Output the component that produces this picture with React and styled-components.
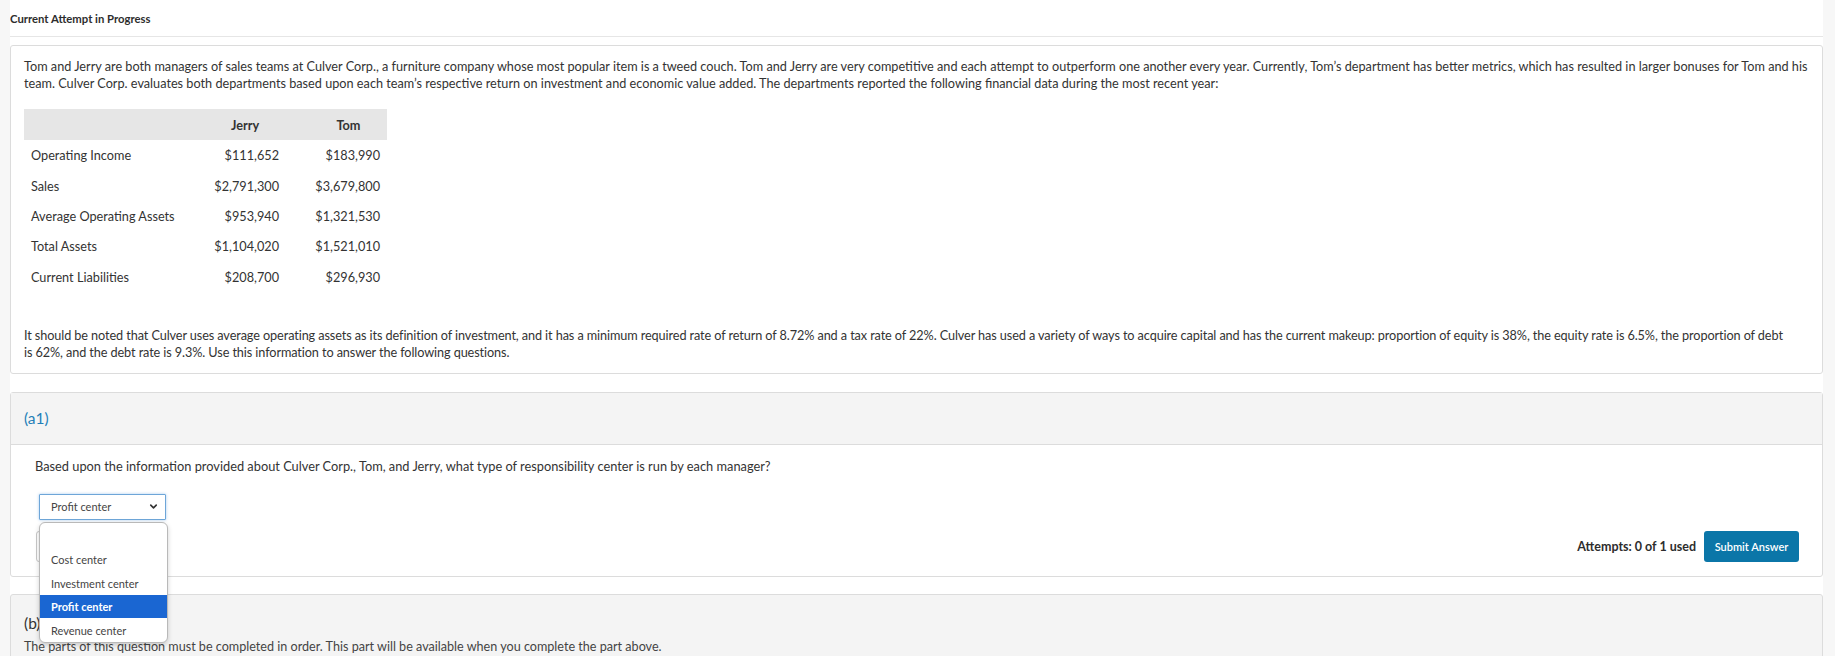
import React from 'react';
import styled, { createGlobalStyle } from 'styled-components';
import { ChevronDown } from 'lucide-react';

const GlobalStyle = createGlobalStyle`
  html, body {
    margin: 0;
    padding: 0;
    background: #f7f7f7;
  }
  body {
    font-family: Lato, "Open Sans", Arial, sans-serif;
    color: #333;
  }
`;

const Page = styled.main`
  margin: 0 12px 0 10px;
  background: #fff;
  height: 656px;
  overflow: hidden;
`;

const TopBar = styled.div`
  height: 35px;
  display: flex;
  align-items: center;
  border-bottom: 1px solid #e6e6e6;
  font-size: 11.3px;
  font-weight: 700;
  color: #2d2d2d;
  padding-top: 1px;
`;

const Card = styled.section`
  border: 1px solid #dcdcdc;
  border-radius: 3px;
  background: ${p => (p.$muted ? '#f4f4f4' : '#fff')};
  margin-top: ${p => p.$gap || 0}px;
`;

const CardBody = styled.div`
  padding: ${p => p.$pad || '12px 13px'};
`;

const Para = styled.p`
  margin: 0;
  font-size: 12.7px;
  letter-spacing: ${p => p.$track || 0}px;
  max-width: ${p => p.$max || 'none'};
  line-height: 17px;
  color: #333;
`;

const DataTable = styled.table`
  border-collapse: collapse;
  margin: 17px 0 35px;
  font-size: 12.7px;
  color: #333;

  th {
    background: #e6e6e6;
    height: 31px;
    font-weight: 700;
    text-align: center;
    padding: 0;
  }
  td {
    height: 30.4px;
    padding: 0 7px;
    text-align: right;
  }
  td:first-child {
    text-align: left;
    padding-left: 7px;
  }
`;

const PartHeader = styled.div`
  height: 51px;
  display: flex;
  align-items: center;
  padding: 0 13px;
  background: #f4f4f4;
  border-bottom: 1px solid #dcdcdc;
  font-size: 15.5px;
  color: #1f7fb8;
`;

const Question = styled.div`
  font-size: 12.8px;
  line-height: 17px;
  margin-top: 13px;
`;

const SelectWrap = styled.div`
  position: relative;
  margin: 19px 0 0 4px;
  width: 127px;
`;

const SelectBox = styled.div`
  box-sizing: border-box;
  height: 26px;
  border: 1px solid #6ea6d8;
  box-shadow: 0 0 3px rgba(60, 140, 220, 0.45);
  border-radius: 1px;
  display: flex;
  align-items: center;
  justify-content: space-between;
  padding: 0 6px 0 11px;
  font-size: 11px;
  color: #444;
  background: #fff;
`;

const Listbox = styled.ul`
  position: absolute;
  top: 28px;
  left: 0;
  width: 127px;
  margin: 0;
  padding: 0;
  list-style: none;
  background: #fff;
  border: 1px solid #b9b9b9;
  border-radius: 6px;
  box-shadow: 0 2px 5px rgba(0, 0, 0, 0.18);
  overflow: hidden;
  z-index: 5;
`;

const Option = styled.li`
  height: ${p => (p.$blank ? 25 : 23.5)}px;
  display: flex;
  align-items: center;
  padding-left: 11px;
  font-size: 11px;
  color: ${p => (p.$active ? '#fff' : '#444')};
  background: ${p => (p.$active ? '#1a66d2' : 'transparent')};
  font-weight: ${p => (p.$active ? 700 : 400)};
`;

const ActionRow = styled.div`
  display: flex;
  align-items: center;
  justify-content: space-between;
  margin-top: 11px;
  margin-left: 1px;
`;

const GhostButton = styled.button`
  height: 31px;
  padding: 0 16px;
  border: 1px solid #c8c8c8;
  border-radius: 3px;
  background: #fff;
  font-family: inherit;
  font-size: 11px;
  color: #555;
`;

const Right = styled.div`
  display: flex;
  align-items: center;
  gap: 8px;
`;

const Attempts = styled.span`
  font-size: 12.5px;
  font-weight: 700;
  color: #2d2d2d;
`;

const SubmitButton = styled.button`
  height: 31px;
  width: 95px;
  border: none;
  border-radius: 3px;
  background: #0b76a8;
  color: #fff;
  font-family: inherit;
  font-size: 11px;
  font-weight: 600;
`;

const PartTitle = styled.div`
  font-size: 15.5px;
  color: #333;
  line-height: 20px;
`;

const Note = styled.div`
  font-size: 12.6px;
  color: #444;
  line-height: 17px;
  margin-top: 5px;
`;

const rows = [
  ['Operating Income', '$111,652', '$183,990'],
  ['Sales', '$2,791,300', '$3,679,800'],
  ['Average Operating Assets', '$953,940', '$1,321,530'],
  ['Total Assets', '$1,104,020', '$1,521,010'],
  ['Current Liabilities', '$208,700', '$296,930'],
];

const options = ['Cost center', 'Investment center', 'Profit center', 'Revenue center'];

export default function App() {
  return (
    <>
      <GlobalStyle />
      <Page>
        <TopBar>Current Attempt in Progress</TopBar>

        <Card $gap={8}>
          <CardBody>
            <Para>
              Tom and Jerry are both managers of sales teams at Culver Corp., a furniture company whose most popular item is a tweed couch. Tom and Jerry are very competitive and each attempt to outperform one another every year. Currently, Tom’s department has better metrics, which has resulted in larger bonuses for Tom and his team. Culver Corp. evaluates both departments based upon each team’s respective return on investment and economic value added. The departments reported the following financial data during the most recent year:
            </Para>
            <DataTable>
              <thead>
                <tr>
                  <th style={{ width: 180 }}></th>
                  <th style={{ width: 82 }}>Jerry</th>
                  <th style={{ width: 77, paddingLeft: 24 }}>Tom</th>
                </tr>
              </thead>
              <tbody>
                {rows.map(r => (
                  <tr key={r[0]}>
                    <td>{r[0]}</td>
                    <td>{r[1]}</td>
                    <td>{r[2]}</td>
                  </tr>
                ))}
              </tbody>
            </DataTable>
            <Para $track={-0.1} $max="1770px">
              It should be noted that Culver uses average operating assets as its definition of investment, and it has a minimum required rate of return of 8.72% and a tax rate of 22%. Culver has used a variety of ways to acquire capital and has the current makeup: proportion of equity is 38%, the equity rate is 6.5%, the proportion of debt is 62%, and the debt rate is 9.3%. Use this information to answer the following questions.
            </Para>
          </CardBody>
        </Card>

        <Card $gap={18}>
          <PartHeader>(a1)</PartHeader>
          <CardBody $pad="0 23px 14px 24px">
            <Question>
              Based upon the information provided about Culver Corp., Tom, and Jerry, what type of responsibility center is run by each manager?
            </Question>
            <SelectWrap>
              <SelectBox>
                Profit center
                <ChevronDown size={11} strokeWidth={3.5} color="#333" />
              </SelectBox>
              <Listbox>
                <Option $blank />
                {options.map(o => (
                  <Option key={o} $active={o === 'Profit center'}>{o}</Option>
                ))}
              </Listbox>
            </SelectWrap>
            <ActionRow>
              <GhostButton>Save for Later</GhostButton>
              <Right>
                <Attempts>Attempts: 0 of 1 used</Attempts>
                <SubmitButton>Submit Answer</SubmitButton>
              </Right>
            </ActionRow>
          </CardBody>
        </Card>

        <Card $gap={17} $muted>
          <CardBody $pad="18px 13px 10px">
            <PartTitle>(b)</PartTitle>
            <Note>The parts of this question must be completed in order. This part will be available when you complete the part above.</Note>
          </CardBody>
        </Card>
      </Page>
    </>
  );
}
